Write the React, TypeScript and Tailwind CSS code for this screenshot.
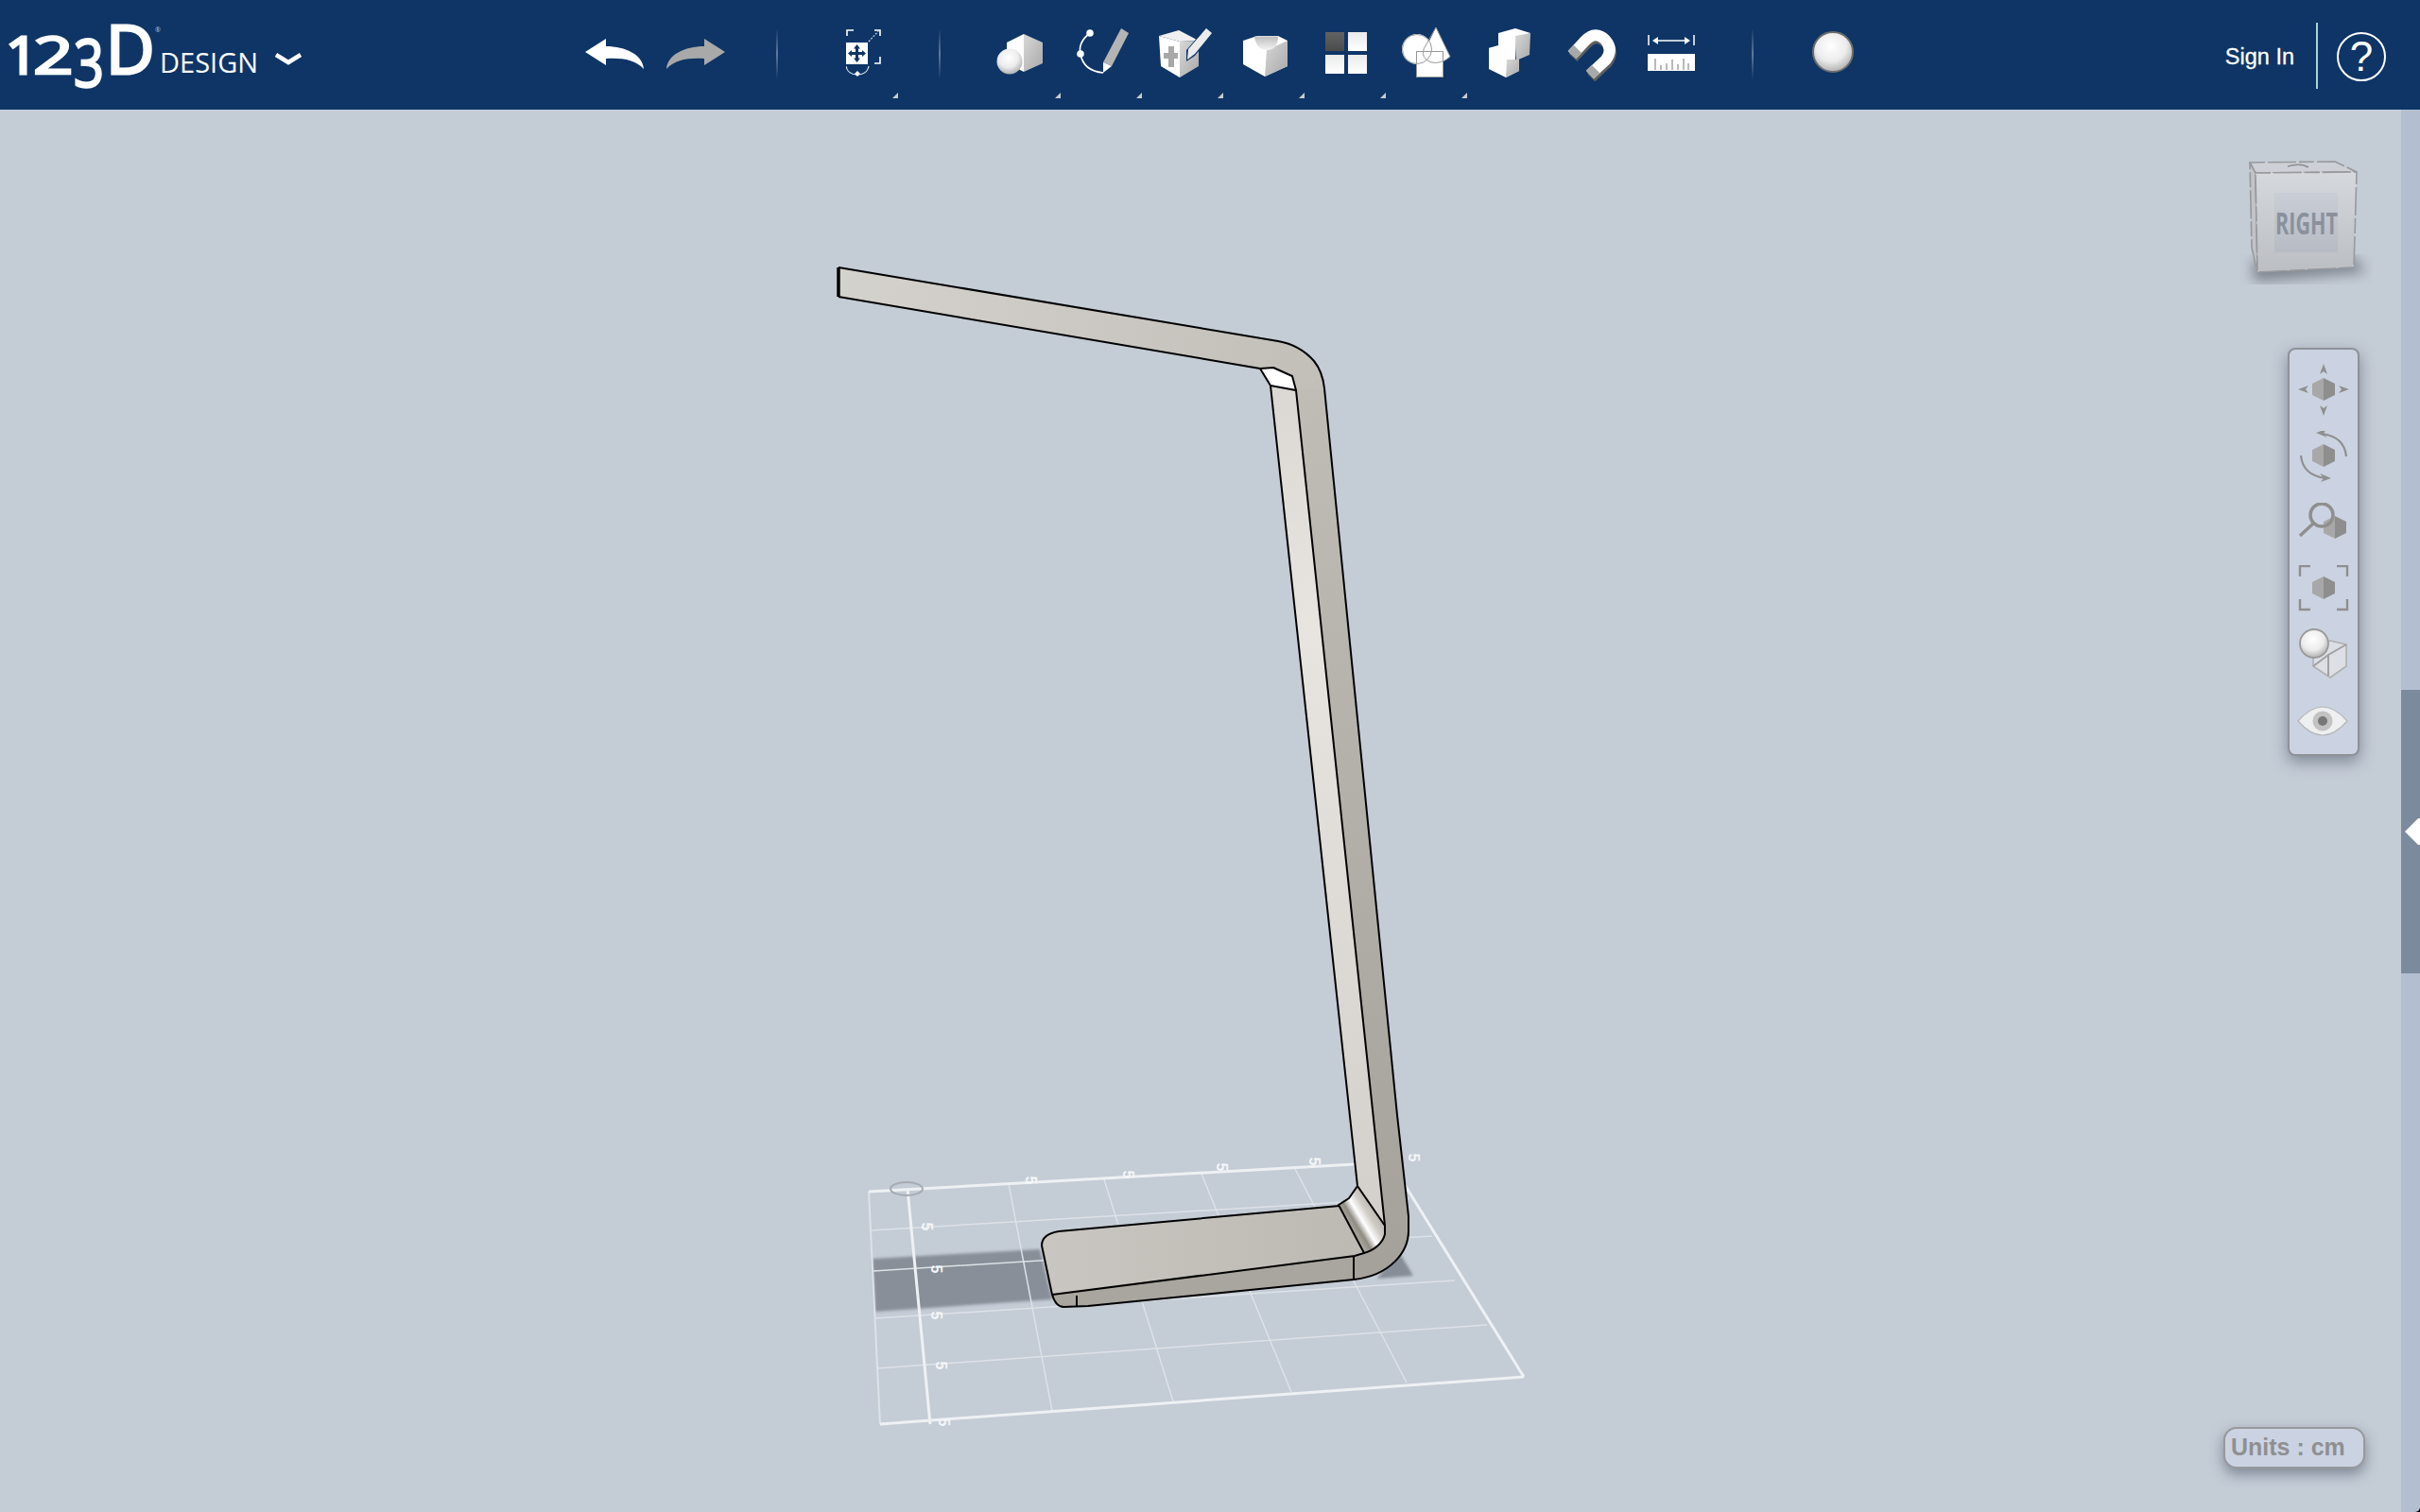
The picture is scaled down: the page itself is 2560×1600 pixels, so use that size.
import React from "react";

function Tri({ className }: { className: string }) {
  return (
    <svg viewBox="0 0 6 6" className={"absolute top-[98px] w-[6px] h-[6px] " + className}>
      <path d="M6 0V6H0Z" fill="#c8ccd2" />
    </svg>
  );
}

function Sep({ className }: { className: string }) {
  return (
    <div className={"flex-none w-[2px] h-[54px] mt-[30px] bg-gradient-to-b from-transparent via-[#64799a] to-transparent " + className} />
  );
}

function Hex({ cx, cy }: { cx: number; cy: number }) {
  return (
    <g>
      <path d={`M${cx} ${cy - 12}L${cx - 12} ${cy - 6}V${cy + 6}L${cx} ${cy + 12}Z`} fill="#a8a8a8" />
      <path d={`M${cx} ${cy - 12}L${cx + 12} ${cy - 6}V${cy + 6}L${cx} ${cy + 12}Z`} fill="#8e8e8e" />
    </g>
  );
}

function Defs() {
  return (
    <svg className="block w-0 h-0 flex-none">
      <defs>
        <linearGradient id="greyH" x1="0" x2="1" y1="0" y2="1">
          <stop offset="0" stopColor="#d8d8d8" />
          <stop offset="1" stopColor="#a8a8a8" />
        </linearGradient>
        <linearGradient id="notch" x1="0" x2="0" y1="0" y2="1">
          <stop offset="0" stopColor="#bdbdbd" />
          <stop offset="1" stopColor="#f4f4f4" />
        </linearGradient>
        <radialGradient id="ball" cx="0.45" cy="0.35" r="0.7">
          <stop offset="0" stopColor="#ffffff" />
          <stop offset="0.55" stopColor="#ececec" />
          <stop offset="1" stopColor="#a6a6a6" />
        </radialGradient>
        <linearGradient id="armFill" gradientUnits="userSpaceOnUse" x1="887" y1="283" x2="1400" y2="400">
          <stop offset="0" stopColor="#d4d2cd" />
          <stop offset="1" stopColor="#c2bfb9" />
        </linearGradient>
        <linearGradient id="lightStrip" gradientUnits="userSpaceOnUse" x1="1350" y1="410" x2="1450" y2="1260">
          <stop offset="0" stopColor="#dbd8d3" />
          <stop offset="0.3" stopColor="#e8e5e0" />
          <stop offset="1" stopColor="#d4d1cc" />
        </linearGradient>
        <linearGradient id="darkStrip" gradientUnits="userSpaceOnUse" x1="1380" y1="400" x2="1480" y2="1340">
          <stop offset="0" stopColor="#c0bdb7" />
          <stop offset="1" stopColor="#a5a19b" />
        </linearGradient>
        <linearGradient id="baseTop" gradientUnits="userSpaceOnUse" x1="1110" y1="1310" x2="1430" y2="1320">
          <stop offset="0" stopColor="#c9c6c1" />
          <stop offset="1" stopColor="#bdbab4" />
        </linearGradient>
        <linearGradient id="fillet" gradientUnits="userSpaceOnUse" x1="1423" y1="1298" x2="1461" y2="1275">
          <stop offset="0" stopColor="#bcb9b2" />
          <stop offset="0.25" stopColor="#8f8c82" />
          <stop offset="0.42" stopColor="#ffffff" />
          <stop offset="0.62" stopColor="#cfccc5" />
          <stop offset="1" stopColor="#a9a69e" />
        </linearGradient>
        <linearGradient id="cubeFace" x1="0" x2="0" y1="0" y2="1">
          <stop offset="0" stopColor="#d5d8dd" />
          <stop offset="1" stopColor="#bbbec3" />
        </linearGradient>
        <linearGradient id="cubeInner" x1="0" x2="0" y1="0" y2="1">
          <stop offset="0" stopColor="#c8cdd6" />
          <stop offset="1" stopColor="#b6bbc4" />
        </linearGradient>
        <filter id="blur2"><feGaussianBlur stdDeviation="1.6" /></filter>
        <filter id="blur8"><feGaussianBlur stdDeviation="7" /></filter>
      </defs>
    </svg>
  );
}

function Logo() {
  return (
    <div className="flex-none w-[330px] h-[116px] flex items-start pl-[6px] font-['Open_Sans',sans-serif] text-white leading-none relative">
      <span className="flex-none w-[29px] mt-[30px] text-[54px] leading-none origin-left scale-x-[1.1] [-webkit-text-stroke:3px_#fff]">1</span>
      <span className="flex-none w-[43px] mt-[30px] text-[54px] leading-none origin-left scale-x-[1.38] [-webkit-text-stroke:2.5px_#fff]">2</span>
      <span className="flex-none w-[34px] mt-[30px] text-[70px] leading-none origin-left scale-x-[0.8] [-webkit-text-stroke:2.5px_#fff]">3</span>
      <span className="flex-none w-[57px] mt-[15px] text-[71px] leading-none [-webkit-text-stroke:3px_#fff]">D</span>
      <span className="flex-none w-[115px] mt-[51px] text-[29px] leading-none">DESIGN</span>
      <span className="absolute left-[164px] top-[28px] text-[7px] leading-none text-[#b9c6d8]">®</span>
      <svg viewBox="0 0 30 14" className="flex-none w-[30px] h-[14px] mt-[55px] ml-[6px]">
        <path d="M2 3L15 11L28 3" fill="none" stroke="#fff" strokeWidth="4.5" />
      </svg>
    </div>
  );
}

function Toolbar() {
  return (
    <header className="flex-none h-[116px] bg-[#0e3566] flex items-start font-['Liberation_Sans',sans-serif]">
      <Logo />
      <svg viewBox="619 41 62 32" className="flex-none w-[62px] h-[32px] mt-[41px] ml-[289px]">
        <path d="M619 55L641 41V49C662 49 680 58 681 73C672 63 658 61 641 62V69Z" fill="#fff" />
      </svg>
      <svg viewBox="705 41 62 32" className="flex-none w-[62px] h-[32px] mt-[41px] ml-[24px]">
        <path d="M767 55L745 41V49C724 49 706 58 705 73C714 63 728 61 745 62V69Z" fill="#a9a9a9" />
      </svg>
      <Sep className="ml-[54px]" />
      <div className="relative flex-none w-[37px] h-[116px] ml-[72px]">
        <svg viewBox="895 31 38 52" className="w-[38px] h-[52px] mt-[31px] block">
          <path d="M896 38V32H903M925 32H931V38M931 60V67H925" fill="none" stroke="#fff" strokeWidth="1.6" />
          <path d="M919 44L930 32" stroke="#cfd6df" strokeWidth="1.2" strokeDasharray="2 1.5" />
          <rect x="895" y="45" width="23" height="23" fill="#fff" />
          <path d="M906.5 47L910 51.5H908V55H912V53L916 56.5L912 60V58H908V61.5H910L906.5 66L903 61.5H905V58H901V60L897 56.5L901 53V55H905V51.5H903Z" fill="#0e3566" />
          <path d="M895 70C896 76 901 79 907 79C913 79 918 76 919 70" fill="none" stroke="#dfe4ea" strokeWidth="1.2" />
          <path d="M907 75L910 78L907 81L904 78Z" fill="#fff" />
        </svg>
        <Tri className="left-[49px]" />
      </div>
      <Sep className="ml-[61px]" />
      <div className="relative flex-none w-[50px] h-[116px] ml-[59px]">
        <svg viewBox="1054 36 50 43" className="w-[50px] h-[43px] mt-[36px] block">
          <path d="M1083 36L1065 45V67L1083 76Z" fill="#fff" />
          <path d="M1083 36L1103 45V67L1083 76Z" fill="url(#greyH)" />
          <circle cx="1068" cy="65" r="13.5" fill="url(#ball)" />
        </svg>
        <Tri className="left-[62px]" />
      </div>
      <div className="relative flex-none w-[56px] h-[116px] ml-[35px]">
        <svg viewBox="1139 30 56 48" className="w-[56px] h-[48px] mt-[30px] block">
          <path d="M1153 35Q1140 45 1143 57Q1146 75 1167 77" fill="none" stroke="#fff" strokeWidth="1.6" />
          <circle cx="1153" cy="35" r="3.8" fill="#fff" />
          <circle cx="1143" cy="57" r="3.8" fill="#fff" />
          <path d="M1186 30L1194 35L1176 70L1167 66Z" fill="#b4b4b4" />
          <path d="M1167 66L1176 70L1167 77Z" fill="#fff" />
        </svg>
        <Tri className="left-[63px]" />
      </div>
      <div className="relative flex-none w-[56px] h-[116px] ml-[30px]">
        <svg viewBox="1225 30 56 53" className="w-[56px] h-[53px] mt-[30px] block overflow-visible">
          <path d="M1226 38L1248 44V82L1228 70Z" fill="#fff" />
          <path d="M1226 38L1247 32L1268 43L1248 44Z" fill="#f0f0f0" />
          <path d="M1248 44L1268 43V70L1248 82Z" fill="url(#greyH)" />
          <path d="M1236 49H1242V56H1246V62H1242V71H1236V62H1231V56H1236Z" fill="#a8a8a8" />
          <path d="M1275 30L1283 36L1264 59L1255 65L1255 53Z" fill="#0e3566" />
          <path d="M1276 30L1282 35L1264 57L1256 63L1257 52Z" fill="#ececec" />
        </svg>
        <Tri className="left-[63px]" />
      </div>
      <div className="relative flex-none w-[48px] h-[116px] ml-[33px]">
        <svg viewBox="1314 38 48 44" className="w-[48px] h-[44px] mt-[38px] block">
          <path d="M1315 43L1330 38H1352L1362 43V70L1338 81L1315 68Z" fill="#fff" />
          <path d="M1340 53L1362 43V70L1338 81Z" fill="url(#greyH)" />
          <path d="M1327 38.5H1352Q1352 53 1340 53Q1329 53 1327 38.5Z" fill="url(#notch)" />
        </svg>
        <Tri className="left-[60px]" />
      </div>
      <div className="relative flex-none w-[44px] h-[116px] ml-[40px]">
        <div className="grid grid-cols-[20px_20px] grid-rows-[20px_20px] gap-x-[4px] gap-y-[4px] mt-[34px]">
          <div className="bg-gradient-to-b from-[#636363] to-[#4b4b4b]" />
          <div className="bg-gradient-to-b from-[#eaeaea] to-white" />
          <div className="bg-gradient-to-b from-[#eaeaea] to-white" />
          <div className="bg-gradient-to-b from-[#eaeaea] to-white" />
        </div>
        <Tri className="left-[58px]" />
      </div>
      <div className="relative flex-none w-[51px] h-[116px] ml-[37px]">
        <svg viewBox="1483 29 52 54" className="w-[52px] h-[54px] mt-[29px] block">
          <circle cx="1499" cy="52" r="16" fill="#fff" />
          <path d="M1519 29L1534 60Q1525 68 1514 66Q1506 64 1505 58Z" fill="#fff" />
          <rect x="1498" y="54" width="29" height="28" fill="#fff" />
          <circle cx="1499" cy="52" r="15.5" fill="none" stroke="#999" strokeWidth="1" />
          <path d="M1519 29L1534 60Q1525 68 1514 66Q1503 62 1506 52Z" fill="none" stroke="#999" strokeWidth="1" />
          <rect x="1498.5" y="54.5" width="28" height="27" fill="none" stroke="#999" strokeWidth="1" />
        </svg>
        <Tri className="left-[63px]" />
      </div>
      <svg viewBox="1575 30 44 53" className="flex-none w-[44px] h-[53px] mt-[30px] ml-[41px]">
        <path d="M1585 35L1603 30L1619 35L1604 40L1603 64L1607 63V75L1593 82L1575 73L1574 51L1585 48Z" fill="#fff" />
        <path d="M1603 38L1619 35L1618 58L1604 64Z" fill="url(#greyH)" />
        <path d="M1594 63L1607 63V75L1593 82Z" fill="url(#greyH)" />
      </svg>
      <svg viewBox="1656 30 54 56" className="flex-none w-[54px] h-[56px] mt-[30px] ml-[37px]">
        <path d="M1664 61L1678 46Q1689 35 1699 45Q1708 55 1700 66L1683 82" fill="none" stroke="#5f5f5f" strokeWidth="12" />
        <path d="M1663 58L1677 43Q1688 32 1698 42Q1707 52 1699 63L1682 79" fill="none" stroke="#fff" strokeWidth="12" />
        <path d="M1663 58L1669 52" fill="none" stroke="#a8a8a8" strokeWidth="12" />
        <path d="M1682 79L1688 73" fill="none" stroke="#a8a8a8" strokeWidth="12" />
      </svg>
      <svg viewBox="1743 37 50 38" className="flex-none w-[50px] h-[38px] mt-[37px] ml-[33px]">
        <path d="M1744 37V48M1792 37V48" stroke="#fff" strokeWidth="1.5" />
        <path d="M1750 43H1786" stroke="#fff" strokeWidth="1.6" />
        <path d="M1748 43L1754 39V47ZM1788 43L1782 39V47Z" fill="#fff" />
        <rect x="1743" y="57" width="50" height="18" fill="#fff" />
        <path d="M1751 62V74M1757 69V74M1763 67V74M1769 63V74M1775 68V74M1781 62V74M1786 67V74" stroke="#a8a8a8" strokeWidth="1.6" />
      </svg>
      <Sep className="ml-[60px]" />
      <svg viewBox="1917 33 44 44" className="flex-none w-[44px] h-[44px] mt-[33px] ml-[62px]">
        <circle cx="1939" cy="55" r="21" fill="url(#ball)" stroke="#6d6d6d" strokeWidth="2" />
      </svg>
      <span className="ml-auto mt-[47px] text-[23.5px] leading-[27px] text-white whitespace-nowrap [-webkit-text-stroke:0.3px_#fff]">Sign In</span>
      <div className="flex-none w-[2px] h-[70px] mt-[24px] ml-[23px] bg-[#a9d3dc]" />
      <div className="flex-none w-[52px] h-[52px] mt-[34px] ml-[20px] mr-[36px] rounded-full border-2 border-white flex items-center justify-center text-white text-[44px] leading-none">?</div>
    </header>
  );
}

function Model() {
  const grid = "#dde2e7";
  const bright = "#eef1f4";
  return (
    <svg viewBox="0 116 2540 1484" className="block w-[2540px] h-[1484px]">
      <path d="M923 1332L1100 1322L1113 1375L926 1388Z" fill="#888f98" filter="url(#blur2)" />
      <path d="M1470 1335L1482 1328L1495 1350L1457 1353Z" fill="#868d97" filter="url(#blur2)" />
      <g fill="none" stroke={grid} strokeWidth="1.5">
        <path d="M919 1261L931 1507" strokeWidth="2" />
        <path d="M921 1302L1490 1268M924 1345L1515 1308M926 1395L1539 1355M928 1448L1573 1402" />
        <path d="M1067 1253L1113 1493M1168 1248L1241 1483M1270 1240L1366 1473M1370 1237L1488 1463" />
      </g>
      <g fill="none" stroke={bright} strokeWidth="3">
        <path d="M919 1261L1433 1232" />
        <path d="M931 1507L1612 1457" />
        <path d="M1470 1228L1612 1457" />
        <path d="M960 1258L984 1507" />
      </g>
      <ellipse cx="959" cy="1258" rx="17" ry="7" fill="none" stroke="#a6abb1" strokeWidth="2" />
      <g fill="#f4f6f7" fontSize="16" fontWeight="700" fontFamily="'Liberation Sans',sans-serif">
        {[
          [1085, 1249],
          [1188, 1243],
          [1287, 1235],
          [1385, 1229],
          [1490, 1225],
          [975, 1298],
          [985, 1343],
          [985, 1392],
          [990, 1445],
          [993, 1505],
        ].map(([x, y], i) => (
          <text key={i} x={x} y={y} textAnchor="middle" transform={`rotate(90 ${x} ${y})`}>5</text>
        ))}
      </g>
      <path d="M1113 1370Q1117 1383 1125 1383L1151 1382L1433 1354V1329Z" fill="#a9a59f" />
      <path d="M1120 1303L1417 1276L1442 1327L1433 1329L1113 1370L1102 1318Q1102 1306 1120 1303Z" fill="url(#baseTop)" />
      <path d="M1371 412L1401 410L1478 1180L1490 1287V1300C1491 1325 1470 1350 1432 1354V1330C1450 1327 1465 1318 1465 1297Z" fill="url(#darkStrip)" />
      <path d="M1344 408L1371 413L1465 1297L1436 1255Z" fill="url(#lightStrip)" />
      <path d="M1416 1275L1427 1268L1436 1255L1465 1297V1306C1463 1315 1454 1323 1443 1326Z" fill="url(#fillet)" />
      <path d="M1333 390L1347 389L1367 398L1371 413L1344 408Z" fill="#fff" />
      <path d="M887 283L1352 361Q1375 365 1390 382Q1399 393 1401 411L1371 413L1367 398L1347 389L1333 390L887 314Z" fill="url(#armFill)" />
      <g fill="none" stroke="#000" strokeWidth="2" strokeLinejoin="round">
        <path d="M887 283L1352 361Q1375 365 1390 382Q1399 393 1401 411L1478 1180L1490 1287V1300C1491 1325 1470 1350 1432 1354L1151 1382L1125 1383Q1117 1383 1113 1370L1102 1318Q1102 1306 1120 1303L1417 1276" />
        <path d="M1113 1370L1433 1329L1443 1326C1454 1323 1463 1315 1465 1306V1297L1371 413L1367 398L1347 389L1333 390L887 314" />
        <path d="M1333 390L1344 408L1371 413" />
        <path d="M1344 408L1436 1255L1427 1268L1416 1275L1443 1326" />
        <path d="M1436 1255L1465 1297" />
        <path d="M1432 1330V1354" />
        <path d="M1139 1371V1383" />
      </g>
      <path d="M887 283V314" strokeWidth="3.5" stroke="#000" fill="none" />
    </svg>
  );
}

function ViewCube() {
  return (
    <svg viewBox="2360 160 150 150" className="absolute top-[44px] right-[30px] w-[150px] h-[150px]">
      <path d="M2382 276L2490 272L2503 288L2385 298Z" fill="#5f6670" opacity="0.7" filter="url(#blur8)" />
      <g stroke="#97999c" strokeWidth="1.6" strokeDasharray="16 3 30 3">
        <path d="M2380 172L2470 171L2493 182L2386 183Z" fill="#cdd0d6" />
        <path d="M2380 172L2386 183L2388 288L2382 262Z" fill="#c0c3c8" />
        <path d="M2386 183L2493 182L2490 283L2388 288Z" fill="url(#cubeFace)" />
      </g>
      <rect x="2406" y="204" width="67" height="63" fill="url(#cubeInner)" />
      <path d="M2420 176Q2434 172 2442 177" fill="none" stroke="#8a8d92" strokeWidth="1.5" />
      <text x="2407" y="248" fontFamily="'Open Sans',sans-serif" fontWeight="700" fontSize="32" fill="#8a919c" textLength="66" lengthAdjust="spacingAndGlyphs">RIGHT</text>
    </svg>
  );
}

function NavPanel() {
  const g = "#8f8f8f";
  return (
    <div className="absolute top-[252px] right-[44px] w-[76px] h-[432px] rounded-[8px] border-2 border-[#8e9297] bg-[#cbd3e2] shadow-[0_6px_16px_rgba(60,70,85,0.5)] flex flex-col items-center">
      <svg viewBox="2428 385 60 56" className="flex-none w-[60px] h-[56px] mt-[15px]">
        <Hex cx={2458} cy={412} />
        <path d="M2458 385L2462 396L2458 393L2454 396ZM2458 440L2454 429L2458 432L2462 429ZM2431 412L2442 408L2439 412L2442 416ZM2485 412L2474 416L2477 412L2474 408Z" fill={g} />
      </svg>
      <svg viewBox="2428 456 60 55" className="flex-none w-[60px] h-[55px] mt-[15px]">
        <Hex cx={2458} cy={482} />
        <path d="M2482 483Q2480 462 2456 459M2434 482Q2436 503 2460 506" fill="none" stroke={g} strokeWidth="2.2" />
        <path d="M2450 458L2461 454L2458 459L2462 463ZM2466 506L2455 510L2458 506L2454 501Z" fill={g} />
      </svg>
      <svg viewBox="2428 532 60 38" className="flex-none w-[60px] h-[38px] mt-[21px]">
        <Hex cx={2470} cy={558} />
        <circle cx="2456" cy="545" r="12" fill="none" stroke={g} strokeWidth="3.5" />
        <path d="M2447 554L2433 567" stroke={g} strokeWidth="3.5" />
      </svg>
      <svg viewBox="2428 598 60 49" className="flex-none w-[60px] h-[49px] mt-[28px]">
        <Hex cx={2458} cy={622} />
        <path d="M2433 610V599H2444M2472 599H2483V610M2483 634V645H2472M2444 645H2433V634" fill="none" stroke={g} strokeWidth="2.4" />
      </svg>
      <svg viewBox="2428 665 60 53" className="flex-none w-[60px] h-[53px] mt-[18px]">
        <path d="M2465 678L2482 682V705L2465 717L2447 705V684Z" fill="#dcdfe4" stroke="#b0b0b0" strokeWidth="1.6" />
        <path d="M2482 682L2463 693V715M2463 693L2447 705" fill="none" stroke="#a0a0a0" strokeWidth="2" />
        <circle cx="2448" cy="681" r="15" fill="url(#ball)" stroke="#999" strokeWidth="1.8" />
      </svg>
      <svg viewBox="2428 747 60 33" className="flex-none w-[60px] h-[33px] mt-[29px]">
        <path d="M2431 763Q2457 733 2483 763Q2457 793 2431 763Z" fill="#eeeff1" stroke="#b5b5b5" strokeWidth="1.2" />
        <circle cx="2457" cy="763" r="10.5" fill="#c2c2c2" />
        <circle cx="2457" cy="763" r="5" fill="#777" />
      </svg>
    </div>
  );
}

export default function App() {
  return (
    <div className="w-[2560px] h-[1600px] overflow-hidden flex flex-col bg-[#c4ccd6]">
      <Defs />
      <Toolbar />
      <main className="flex-1 flex min-h-0">
        <div className="relative flex-none w-[2540px] bg-[#c4ccd6]">
          <Model />
          <ViewCube />
          <NavPanel />
          <div className="absolute right-[38px] bottom-[46px] w-[150px] h-[44px] pl-[6px] rounded-[14px] border-2 border-[#98999c] bg-[#cbd3e2] shadow-[0_6px_14px_rgba(60,70,85,0.5)] flex items-center font-['Liberation_Sans',sans-serif] font-bold text-[25px] text-[#8f8f92] whitespace-nowrap">Units : cm</div>
        </div>
        <aside className="relative flex-none w-[20px] bg-[#b3bfd0]">
          <div className="mt-[614px] h-[300px] bg-[#7b8b9d] flex items-center">
            <svg viewBox="0 0 20 30" className="w-[20px] h-[30px] block">
              <path d="M4 15L18 1H20V29H18Z" fill="#fff" />
            </svg>
          </div>
          <svg viewBox="0 0 5 5" className="absolute right-0 bottom-0 w-[5px] h-[5px]">
            <path d="M5 0A5 5 0 0 1 0 5H5Z" fill="#000" />
          </svg>
        </aside>
      </main>
    </div>
  );
}
